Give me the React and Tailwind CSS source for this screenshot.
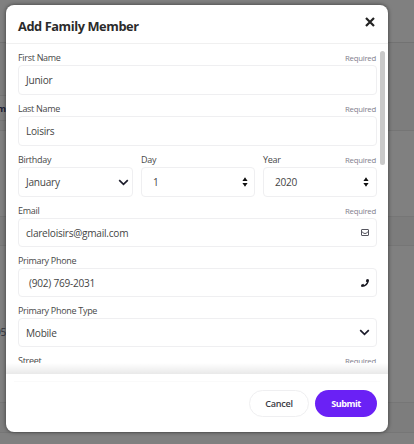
import { FaPhone } from 'react-icons/fa';

function Label({ text, required }) {
  return (
    <div className="flex h-[21px] justify-between whitespace-nowrap">
      <span className="pt-[6px] text-[9px] leading-[15px] tracking-[-0.3px] text-[#484848]">{text}</span>
      {required && (
        <span className="pt-[7px] pr-[1px] text-[7.8px] leading-[15px] tracking-[-0.25px] text-[#7f7e8c]">Required</span>
      )}
    </div>
  );
}

function Field({ label, value, required, icon, className = '', boxClass = 'h-[30px] pl-[7px] pr-[6px]' }) {
  return (
    <div className={className}>
      <Label text={label} required={required} />
      <div className={`flex items-center justify-between rounded-[4px] border border-[#efeff1] text-[10.1px] tracking-[-0.25px] text-[#454545] ${boxClass}`}>
        <span className="pt-[2px]">{value}</span>
        {icon}
      </div>
    </div>
  );
}

function Chevron() {
  return (
    <svg className="h-[7px] w-[11px]" viewBox="0 0 11 7" fill="none" stroke="#1d1d2b" strokeWidth="1.7">
      <path d="M1.2 1.2 5.5 5.3 9.8 1.2" />
    </svg>
  );
}

function Stepper() {
  return (
    <svg className="h-[10px] w-[6px]" viewBox="0 0 6 10" fill="#111">
      <path d="M3 0.2 5.6 4H0.4zM3 9.8 5.6 6H0.4z" />
    </svg>
  );
}

function Envelope() {
  return (
    <svg className="h-[7px] w-[8px]" viewBox="0 0 8 7" fill="none" stroke="#55555f" strokeWidth="1">
      <rect x="0.5" y="0.5" width="7" height="6" rx="0.4" />
      <path d="M0.8 2.6 3 4.4h2L7.2 2.6" />
    </svg>
  );
}

function Close() {
  return (
    <svg className="mb-[5px] size-[10px]" viewBox="0 0 10 10" fill="none" stroke="#222" strokeWidth="2.2">
      <path d="M1 1 9 9M9 1 1 9" />
    </svg>
  );
}

export default function App() {
  return (
    <div className="relative h-[444px] w-[414px] overflow-hidden bg-[#808080] font-['Open_Sans','Noto_Sans',sans-serif]">
      {/* Dimmed page */}
      <div className="h-[43px] border-b border-[#727272]" />
      <div className="h-[88px] border-b border-[#757575] bg-[#7d7d7d] pt-[52px]">
        <div className="flex h-[26px] w-[6px] items-center justify-end border-y border-[#757575] bg-[#808080] pt-[2px] text-[9px] font-bold text-[#1c1c35]">
          m
        </div>
      </div>
      <div className="h-[85px]" />
      <div className="h-[30px] border-y border-[#767676] bg-[#7c7c7c]" />
      <div className="h-[156px] pt-[78px]">
        <div className="flex w-[6px] justify-end text-[10px] leading-[16px] tracking-[-0.3px] text-[#33333d]">95</div>
      </div>
      <div className="h-[31px] border-y border-[#767676] bg-[#7d7d7d]" />

      {/* Dialog */}
      <div className="absolute top-[5px] left-[6px] flex h-[427px] w-[382px] flex-col overflow-hidden rounded-[8px] bg-white shadow-[0_0_4px_rgba(0,0,0,0.55)]">
        <div className="flex h-[39px] shrink-0 items-center justify-between border-b border-[#f0f0f0] pr-[13px] pl-[12px]">
          <h2 className="pt-[5px] text-[12.8px] font-bold tracking-[-0.42px] text-[#2b2b2b]">Add Family Member</h2>
          <Close />
        </div>

        <div className="flex h-[319px] shrink-0 overflow-hidden">
          <div className="ml-[12px] w-[359px] shrink-0">
            <Field label="First Name" value="Junior" required />
            <Field label="Last Name" value="Loisirs" required />
            <div className="flex gap-[8px]">
              <Field className="w-[115px]" boxClass="h-[30px] pl-[7px] pr-[3px]" label="Birthday" value="January" icon={<Chevron />} />
              <Field className="w-[114px]" boxClass="h-[30px] pl-[11px] pr-[6px]" label="Day" value="1" icon={<Stepper />} />
              <Field className="w-[114px]" boxClass="h-[30px] pl-[11px] pr-[7px]" label="Year" value="2020" required icon={<Stepper />} />
            </div>
            <Field boxClass="h-[29px] pl-[7px] pr-[7px]" label="Email" value="clareloisirs@gmail.com" required icon={<Envelope />} />
            <Field
              boxClass="h-[29px] pl-[10px] pr-[7px]"
              label="Primary Phone"
              value="(902) 769-2031"
              icon={<FaPhone className="size-[8px] text-[#16161f]" />}
            />
            <Field boxClass="h-[29px] pl-[7px] pr-[6px]" label="Primary Phone Type" value="Mobile" icon={<Chevron />} />
            <Field label="Street" value="" required />
          </div>
          <div className="mt-[7px] ml-[3px] h-[114px] w-[5px] rounded-full bg-[#c9c9c9]" />
        </div>

        <div className="h-[11px] shrink-0 bg-linear-to-b from-white to-[#e9e9e9]" />
        <div className="mx-[8px] h-[8px] shrink-0 border-b border-[#fafafa]" />
        <div className="flex flex-1 items-start justify-end gap-[6px] pt-[8px] pr-[11px] text-[9.1px]">
          <button className="h-[27px] w-[60px] rounded-full border border-[#efeff1] pt-[1px] font-semibold tracking-[-0.3px] text-[#3a3a45]">Cancel</button>
          <button className="h-[27px] w-[62px] rounded-full bg-[#6a21f5] pt-[1px] font-bold tracking-[-0.5px] text-white">Submit</button>
        </div>
      </div>
    </div>
  );
}
